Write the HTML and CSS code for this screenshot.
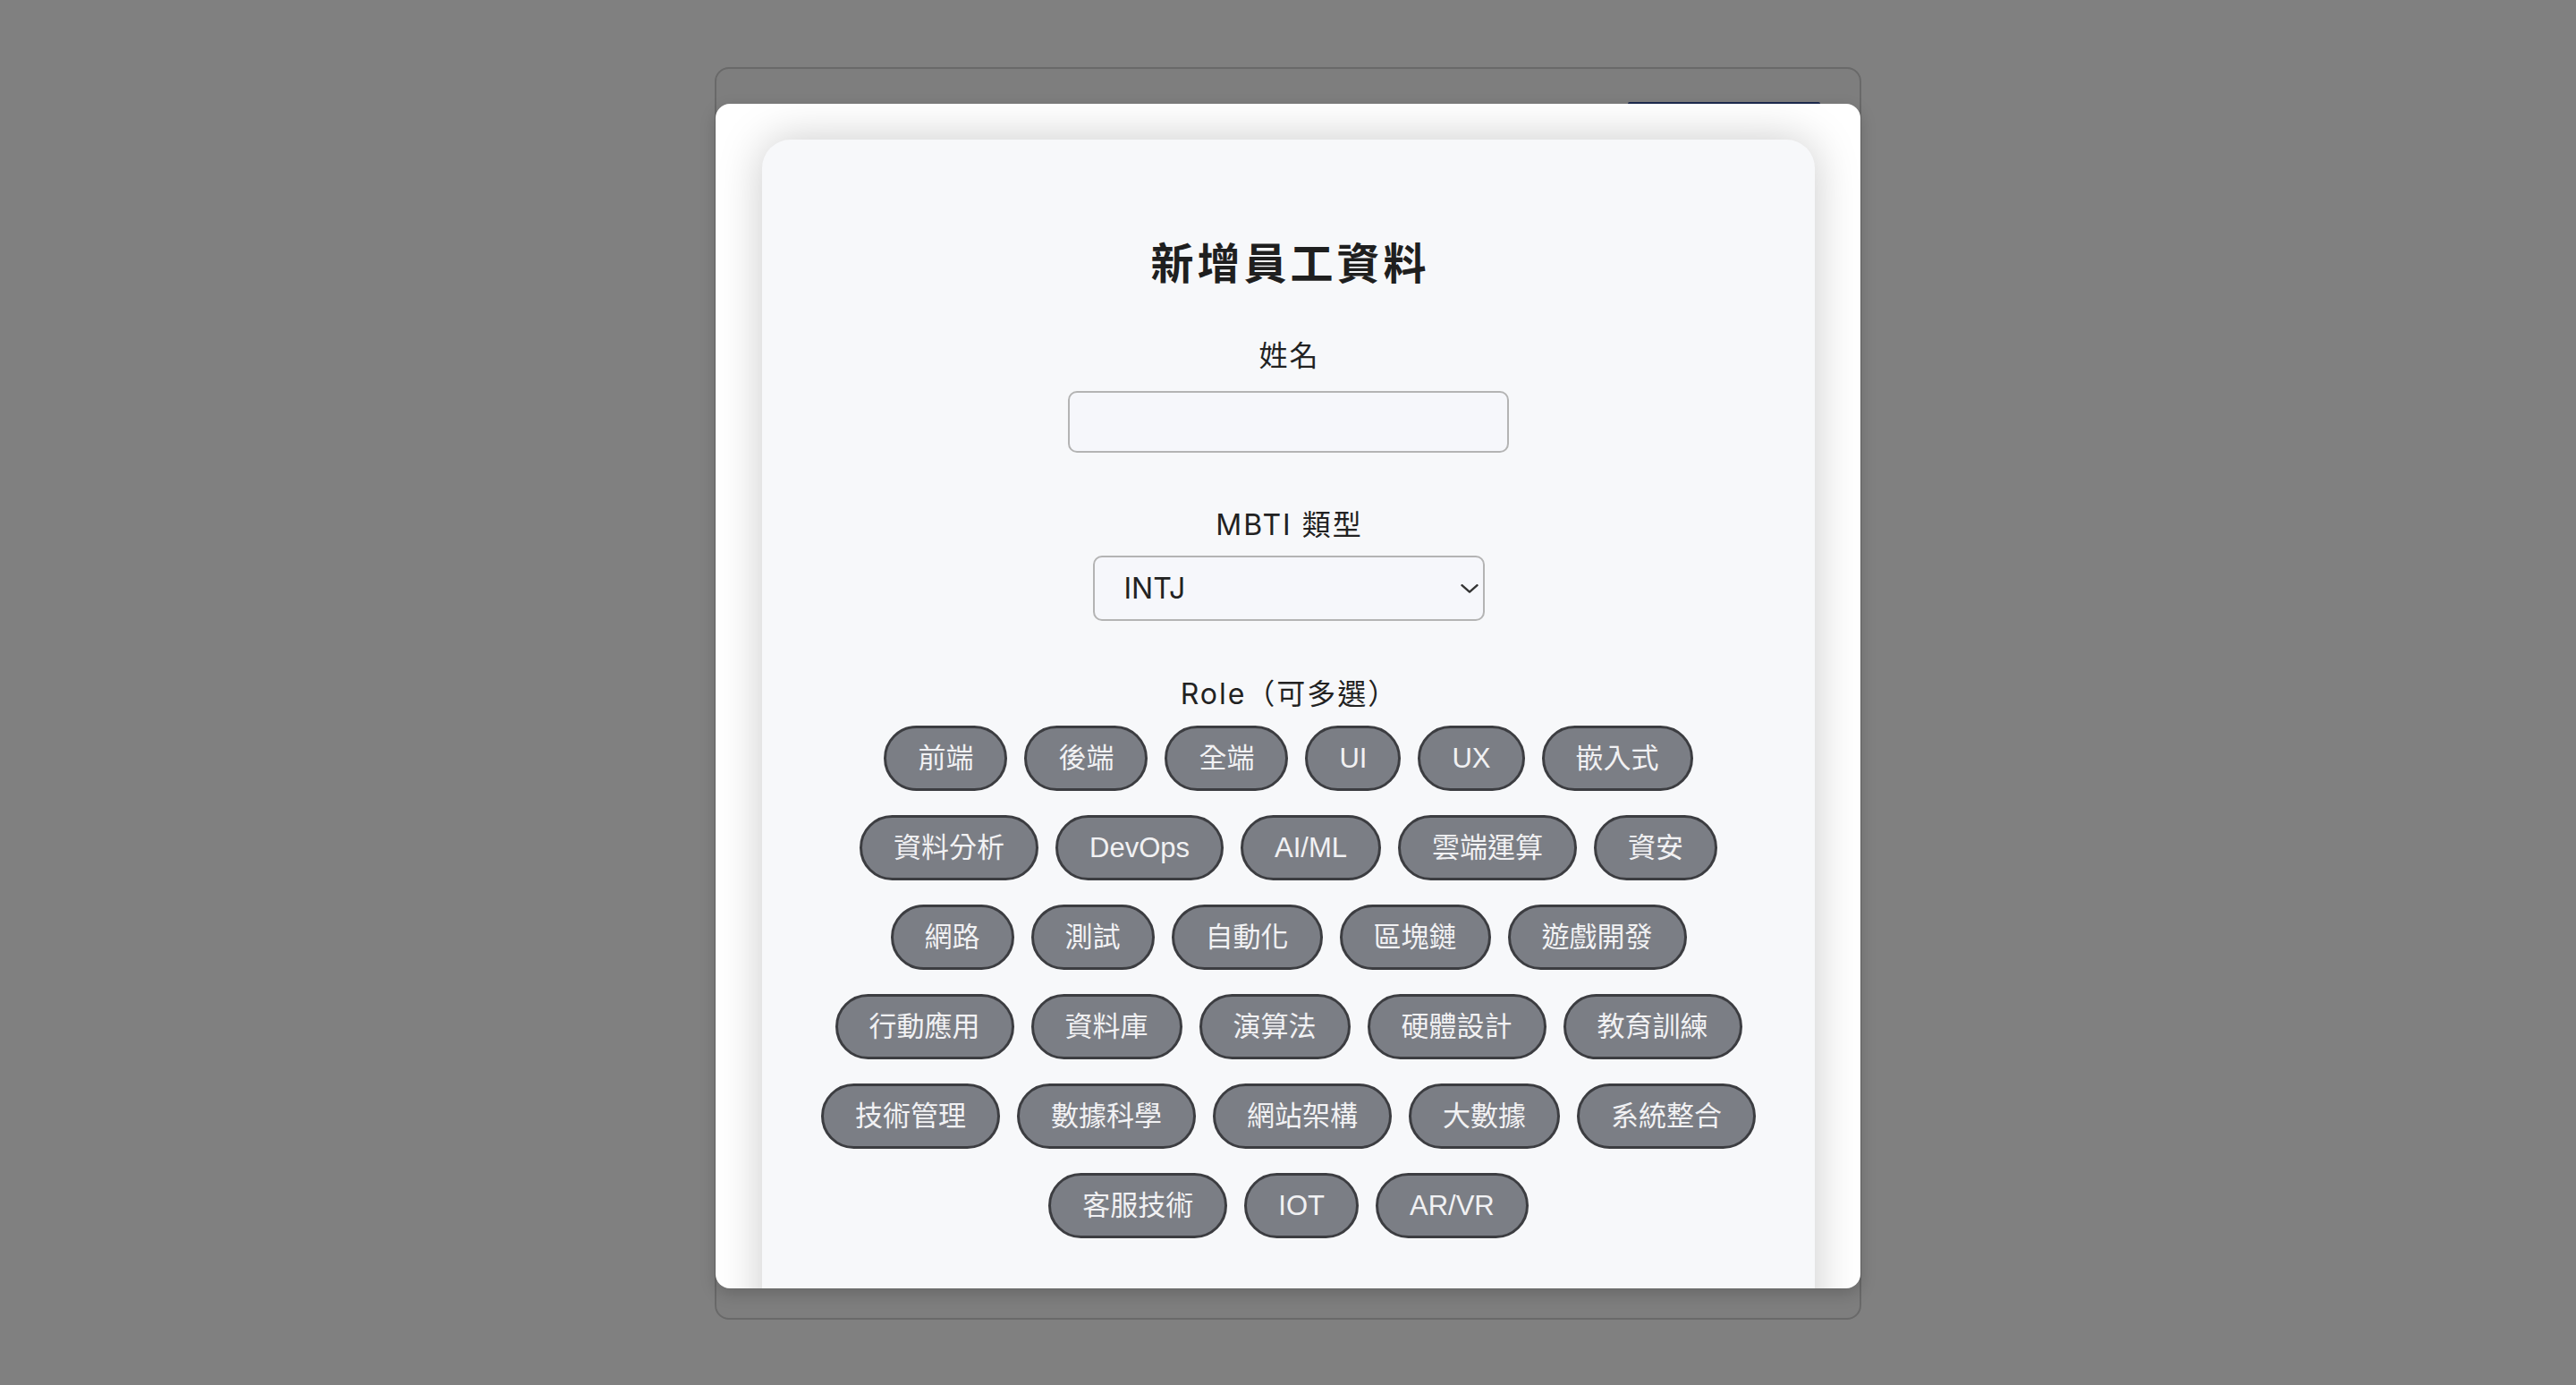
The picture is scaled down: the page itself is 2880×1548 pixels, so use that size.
FILE: index.html
```html
<!DOCTYPE html>
<html lang="zh-Hant">
<head>
<meta charset="utf-8">
<title>新增員工資料</title>
<link rel="stylesheet" href="styles.css">
</head>
<body>
<div class="frame">
  <div class="behind-btn"></div>
  <div class="modal">
    <div class="card">
      <h2 class="title">新增員工資料</h2>
      <label class="label first" for="name">姓名</label>
      <input class="text-input" id="name" type="text">
      <label class="label mbti" for="mbti">MBTI 類型</label>
      <div class="select-wrap">
        <select class="select" id="mbti">
          <option>INTJ</option>
          <option>INTP</option>
          <option>ENTJ</option>
          <option>ENTP</option>
        </select>
        <svg class="chevron" width="20" height="10" viewBox="0 0 20 10"><path d="M1.5 1.2 L10 8.6 L18.5 1.2" fill="none" stroke="#333" stroke-width="2.4" stroke-linecap="round" stroke-linejoin="round"/></svg>
      </div>
      <div class="label role">Role（可多選）</div>
      <div class="pills">
        <button class="pill">前端</button>
        <button class="pill">後端</button>
        <button class="pill">全端</button>
        <button class="pill">UI</button>
        <button class="pill">UX</button>
        <button class="pill">嵌入式</button>
        <button class="pill">資料分析</button>
        <button class="pill">DevOps</button>
        <button class="pill">AI/ML</button>
        <button class="pill">雲端運算</button>
        <button class="pill">資安</button>
        <button class="pill">網路</button>
        <button class="pill">測試</button>
        <button class="pill">自動化</button>
        <button class="pill">區塊鏈</button>
        <button class="pill">遊戲開發</button>
        <button class="pill">行動應用</button>
        <button class="pill">資料庫</button>
        <button class="pill">演算法</button>
        <button class="pill">硬體設計</button>
        <button class="pill">教育訓練</button>
        <button class="pill">技術管理</button>
        <button class="pill">數據科學</button>
        <button class="pill">網站架構</button>
        <button class="pill">大數據</button>
        <button class="pill">系統整合</button>
        <button class="pill">客服技術</button>
        <button class="pill">IOT</button>
        <button class="pill">AR/VR</button>
      </div>
    </div>
  </div>
</div>
</body>
</html>
```
FILE: styles.css
```css
html, body {
  margin: 0;
  padding: 0;
}
body {
  background: #808080;
  height: 1548px;
  overflow: hidden;
  display: flex;
  justify-content: center;
  align-items: flex-start;
  padding-top: 75px;
  box-sizing: border-box;
  font-family: Inter, "Noto Sans CJK TC", sans-serif;
}
.frame {
  position: relative;
  width: 1282px;
  height: 1400px;
  box-sizing: border-box;
  border: 2px solid #696969;
  border-radius: 16px;
  background: #7e7e7e;
  padding-top: 39px;
}
.behind-btn {
  position: absolute;
  top: 37px;
  left: 1019px;
  width: 215px;
  height: 40px;
  background: #1d2a4f;
  border-radius: 2px;
}
.modal {
  position: relative;
  z-index: 1;
  margin: 0 -1px;
  height: 1324px;
  background: #ffffff;
  border-radius: 16px;
  overflow: hidden;
  box-shadow: 0 6px 18px rgba(0, 0, 0, 0.18);
  padding: 40px 51px 0 52px;
  box-sizing: border-box;
}
.card {
  background: #f7f8fa;
  border-radius: 32px;
  min-height: 1500px;
  box-shadow: 0 0 50px rgba(0, 0, 0, 0.21);
  padding-top: 103px;
  display: flex;
  flex-direction: column;
  align-items: center;
  color: #222;
}
.title {
  margin: 0;
  font-family: "Noto Sans CJK TC", sans-serif;
  font-size: 48px;
  line-height: 64px;
  font-weight: 700;
  letter-spacing: 4px;
  color: #1f1f1f;
  padding-left: 4px;
}
.label {
  display: block;
  font-size: 32px;
  line-height: 44px;
  letter-spacing: 2px;
  color: #222;
  padding-left: 2px;
}
.label.first {
  margin-top: 53px;
}
.text-input {
  margin-top: 17px;
  width: 493px;
  height: 69px;
  box-sizing: border-box;
  border: 2.5px solid #b4b4b4;
  border-radius: 10px;
  background: #f6f7fb;
  outline: none;
  font-size: 32px;
  font-family: Inter, sans-serif;
  padding: 0 20px;
}
.label.mbti {
  margin-top: 59px;
}
.select-wrap {
  position: relative;
  margin-top: 12px;
  width: 438px;
  height: 73px;
}
.select {
  appearance: none;
  -webkit-appearance: none;
  width: 100%;
  height: 100%;
  box-sizing: border-box;
  border: 2.5px solid #b4b4b4;
  border-radius: 10px;
  background: #f6f7fb;
  font-family: Inter, sans-serif;
  font-size: 32px;
  color: #222;
  padding: 0 0 0 33px;
  outline: none;
}
.chevron {
  position: absolute;
  right: 7px;
  top: 32px;
  pointer-events: none;
}
.label.role {
  margin-top: 60px;
}
.pills {
  margin-top: 13px;
  width: 1080px;
  display: flex;
  flex-wrap: wrap;
  justify-content: center;
  column-gap: 19px;
  row-gap: 27px;
}
.pill {
  height: 73px;
  box-sizing: border-box;
  border: 3px solid #3c3d41;
  border-radius: 37px;
  background: #7b7e85;
  color: #f1f1f3;
  font-family: "Liberation Sans", "Noto Sans CJK TC", sans-serif;
  font-size: 31px;
  line-height: 1;
  padding: 0 35px;
  display: inline-flex;
  align-items: center;
  justify-content: center;
  cursor: pointer;
}
```
